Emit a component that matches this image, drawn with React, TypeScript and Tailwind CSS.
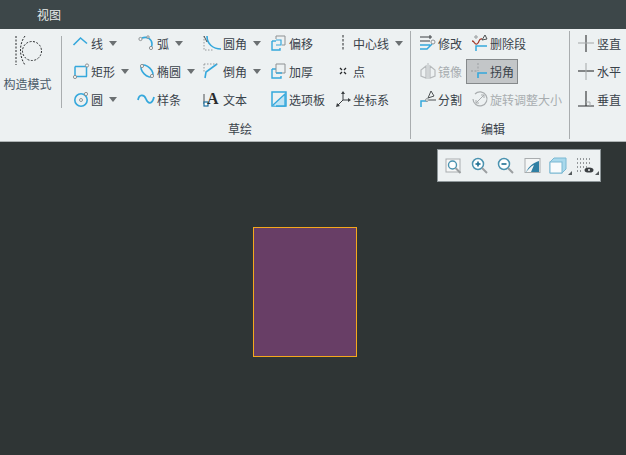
import React from "react";

const B = "#35a8dc";
const K = "#3b3f42";
const G = "#a9adaf";

const Dot = ({ x, y, r = 1.6 }: { x: number; y: number; r?: number }) => (
  <circle cx={x} cy={y} r={r} fill="#f4f6f6" stroke="#85898b" strokeWidth="0.9" />
);

const Svg = ({ children, w = 18, h = 18 }: { children: React.ReactNode; w?: number; h?: number }) => (
  <svg width={w} height={h} viewBox={`0 0 ${w} ${h}`} fill="none" className="shrink-0">
    {children}
  </svg>
);

const icons: Record<string, React.ReactNode> = {
  line: <Svg><path d="M1.5 11l7-7 6.5 5.5" stroke={B} strokeWidth="1.6" /></Svg>,
  arc: <Svg><path d="M4 4c5-2 10 1 10 6 0 2-.5 3-1 4" stroke={B} strokeWidth="1.6" /><Dot x={2.5} y={5} /><Dot x={13} y={14} /><Dot x={10} y={3} r={1.2} /></Svg>,
  rect: <Svg><path d="M3 4.5h12M14.5 4.5v10M3 14.5h12M3 4.5v10" stroke={B} strokeWidth="1.5" /><Dot x={15} y={3.5} /><Dot x={3} y={15} /></Svg>,
  ellipse: <Svg><ellipse cx="9" cy="9" rx="4" ry="7.5" transform="rotate(-45 9 9)" stroke={B} strokeWidth="1.6" /><Dot x={4} y={4} /><Dot x={14} y={14} /></Svg>,
  circle: <Svg><circle cx="9" cy="10" r="6.2" stroke={B} strokeWidth="1.6" /><Dot x={9} y={10} r={1.5} /><Dot x={14} y={4} /></Svg>,
  spline: <Svg w={19}><path d="M1 10c1-6 6-6 8-1s6 6 8-2" stroke={B} strokeWidth="1.8" /></Svg>,
  fillet: <Svg w={19}><path d="M4 2c0 8 6 13 14 13" stroke={B} strokeWidth="1.6" /><path d="M1 2v14h10" stroke="#8d9193" strokeWidth="0.9" strokeDasharray="1.5 1.5" /><path d="M1 2l3 6" stroke={K} strokeWidth="0.9" /></Svg>,
  chamfer: <Svg w={19}><path d="M2 16l1-6 11-8" stroke={B} strokeWidth="1.6" /><path d="M1 2h14M1 2v8" stroke="#8d9193" strokeWidth="0.9" strokeDasharray="1.5 1.5" /></Svg>,
  text: <Svg w={19}><path d="M1 4v10" stroke={K} strokeWidth="0.9" /><rect x="1" y="12" width="4" height="4" fill="#fff" stroke="#1d6fa0" strokeWidth="1.2" /><text x="4" y="14" fontFamily="'Liberation Serif',serif" fontWeight="700" fontSize="16" fill="#2a2c2e">A</text></Svg>,
  offset: <Svg><path d="M2 7v9h8v-2" stroke={B} strokeWidth="1.4" /><path d="M2 7h4" stroke={B} strokeWidth="1.4" /><path d="M6 5V2h9v9h-3" stroke="#8d9193" strokeWidth="1" /><path d="M6 6h5v5H6" stroke={B} strokeWidth="1.2" /></Svg>,
  thicken: <Svg><path d="M2 7v9h9v-2M2 7h4" stroke={B} strokeWidth="1.4" /><path d="M6 2h9v9H6z" stroke="#8d9193" strokeWidth="1" /><path d="M6 11h6" stroke={B} strokeWidth="1.4" /></Svg>,
  palette: <Svg><rect x="2" y="2" width="14" height="14" stroke={B} strokeWidth="1.5" /><path d="M3 15L15 4v12H6" fill="#bfe3f3" stroke={B} strokeWidth="1.3" /></Svg>,
  centerline: <Svg w={14}><path d="M7 1v16" stroke="#26292b" strokeWidth="1" strokeDasharray="2.5 1.5" /></Svg>,
  point: <Svg w={14}><path d="M4 6l2 2M10 6L8 8M4 12l2-2M10 12L8 10" stroke="#26292b" strokeWidth="1.3" /></Svg>,
  csys: <Svg><path d="M9 2v8M9 10h6M9 10l-6 6" stroke={K} strokeWidth="1" /><path d="M9 1l-2 3h4zM17 10l-3-2v4zM2 17l1-4 3 3z" fill={K} /></Svg>,
  modify: <Svg><path d="M1 3h12M11 1v4M1 7h10" stroke={K} strokeWidth="1" /><path d="M1 11h10M1 15h7l5-5" stroke={B} strokeWidth="1.5" /><Dot x={14} y={8} r={2} /></Svg>,
  deleteseg: <Svg><path d="M1 7c3 0 2 4 5 3s1-6 5-5" stroke="#a23b2d" strokeWidth="1.3" /><path d="M5 17v-5h11" stroke={B} strokeWidth="1.5" /><path d="M11 6l3-5 2 4z" stroke={K} strokeWidth="0.9" /><Dot x={5} y={3} r={1.2} /></Svg>,
  mirror: <Svg><path d="M9 1v16" stroke="#b6babc" strokeWidth="1" /><path d="M7 4L2 8v6l5 2zM11 4l5 4v6l-5 2z" stroke="#b6babc" strokeWidth="1.2" /></Svg>,
  corner: <Svg><path d="M7 1v8M0 9h6" stroke="#a5a9ab" strokeWidth="1.3" strokeDasharray="2 1.5" /><path d="M7 16v-5h9" stroke={B} strokeWidth="1.6" /></Svg>,
  divide: <Svg><path d="M2 17v-6h6" stroke={B} strokeWidth="1.5" /><Dot x={8} y={10} r={1.4} /><path d="M10 10h7M9 8l3-7 3 5z" stroke={K} strokeWidth="0.9" /></Svg>,
  rotate: <Svg><path d="M4 4a7 7 0 1 1-2 5" stroke={G} strokeWidth="1.2" /><path d="M5 13l8-8M10 5h3v3M5 10v3h3" stroke={G} strokeWidth="1" /></Svg>,
  vert: <Svg><path d="M8 1v17" stroke="#2c2f31" strokeWidth="1.1" /><path d="M0 9h16" stroke={G} strokeWidth="1.1" /></Svg>,
  horiz: <Svg><path d="M0 9h16" stroke="#2c2f31" strokeWidth="1.1" /><path d="M8 1v17" stroke={G} strokeWidth="1.1" /></Svg>,
  perp: <Svg><path d="M8 1v15M0 16h16" stroke="#2c2f31" strokeWidth="1.1" /><path d="M8 12h4v4" stroke={G} strokeWidth="1" /></Svg>,
};

const Caret = () => <span className="ml-[6px] w-0 h-0 border-l-[4px] border-r-[4px] border-t-[5px] border-l-transparent border-r-transparent border-t-[#6b7072]" />;

function Item({ icon, label, caret, disabled, active }: { icon: string; label: string; caret?: boolean; disabled?: boolean; active?: boolean }) {
  return (
    <div className="h-[28px] flex items-center">
      <div className={`flex items-center h-[25px] ${active ? "bg-[#c3c6c8] border border-[#85898b] pr-[3px] pl-[2px] -ml-[3px]" : ""}`}>
        <span className="w-[21px] flex justify-center shrink-0">{icons[icon]}</span>
        <span className={`pt-[2px] text-[12px] leading-none whitespace-nowrap ${disabled ? "text-[#a8adb0]" : "text-[#39424a]"}`}>{label}</span>
        {caret && <Caret />}
      </div>
    </div>
  );
}

const Col = ({ className, children }: { className: string; children: React.ReactNode }) => (
  <div className={`flex flex-col ${className}`}>{children}</div>
);

const GroupLabel = ({ children }: { children: React.ReactNode }) => (
  <div className="h-[20px] flex items-center justify-center text-[12px] text-[#39424a] leading-none">{children}</div>
);

const ToolBtn = ({ children }: { children: React.ReactNode }) => (
  <div className="w-[26px] h-[20px] flex items-center justify-center">{children}</div>
);

const Mag = ({ sign }: { sign?: "+" | "-" }) => (
  <svg width="18" height="18" viewBox="0 0 18 18" fill="none">
    <circle cx="7" cy="7" r="5.5" fill="#fff" stroke="#4b93b0" strokeWidth="1.5" />
    {sign && <path d="M4.5 7h5" stroke="#1e6e92" strokeWidth="1.6" />}
    {sign === "+" && <path d="M7 4.5v5" stroke="#1e6e92" strokeWidth="1.6" />}
    <path d="M11 11l5 5" stroke="#9b9fa1" strokeWidth="2" />
  </svg>
);

export default function App() {
  return (
    <div className="w-[626px] h-[455px] flex flex-col overflow-hidden bg-[#2f3535] font-['Noto_Sans_CJK_SC','Liberation_Sans',sans-serif]">
      <div className="h-[29px] bg-[#3d4749] flex items-center pl-[37px] text-[12px] text-[#e8ecec] shrink-0">视图</div>

      <div className="h-[113px] bg-[#edf1f2] border-b border-b-[#aeb3b4] flex shrink-0">
        <div className="w-[61px] shrink-0 flex flex-col items-center pt-[5px] pr-[6px]">
          <svg width="30" height="32" viewBox="0 0 30 32" fill="none">
            <path d="M3 2v29" stroke="#26292b" strokeWidth="1" strokeDasharray="2 1.5" />
            <path d="M12 2C6 10 6 22 12 31" stroke="#26292b" strokeWidth="1" strokeDasharray="2 1.5" />
            <circle cx="19" cy="17" r="9.5" stroke="#26292b" strokeWidth="1" strokeDasharray="2 1.5" />
          </svg>
          <span className="mt-[12px] text-[12px] leading-none text-[#4a5a68] whitespace-nowrap">构造模式</span>
        </div>
        <div className="w-px h-[72px] mt-[7px] bg-[#a9adaf] shrink-0" />

        <div className="w-[348px] shrink-0 flex flex-col pl-[8px]">
          <div className="flex h-[84px]">
            <Col className="w-[66px]">
              <Item icon="line" label="线" caret />
              <Item icon="rect" label="矩形" caret />
              <Item icon="circle" label="圆" caret />
            </Col>
            <Col className="w-[66px]">
              <Item icon="arc" label="弧" caret />
              <Item icon="ellipse" label="椭圆" caret />
              <Item icon="spline" label="样条" />
            </Col>
            <Col className="w-[66px]">
              <Item icon="fillet" label="圆角" caret />
              <Item icon="chamfer" label="倒角" caret />
              <Item icon="text" label="文本" />
            </Col>
            <Col className="w-[64px]">
              <Item icon="offset" label="偏移" />
              <Item icon="thicken" label="加厚" />
              <Item icon="palette" label="选项板" />
            </Col>
            <Col className="w-[78px]">
              <Item icon="centerline" label="中心线" caret />
              <Item icon="point" label="点" />
              <Item icon="csys" label="坐标系" />
            </Col>
          </div>
          <div className="mt-[6px]"><GroupLabel>草绘</GroupLabel></div>
        </div>
        <div className="w-px h-[108px] mt-[2px] bg-[#a9adaf] shrink-0" />

        <div className="w-[158px] shrink-0 flex flex-col pl-[6px]">
          <div className="flex h-[84px]">
            <Col className="w-[52px]">
              <Item icon="modify" label="修改" />
              <Item icon="mirror" label="镜像" disabled />
              <Item icon="divide" label="分割" />
            </Col>
            <Col className="w-[98px]">
              <Item icon="deleteseg" label="删除段" />
              <Item icon="corner" label="拐角" active />
              <Item icon="rotate" label="旋转调整大小" disabled />
            </Col>
          </div>
          <div className="mt-[6px]"><GroupLabel>编辑</GroupLabel></div>
        </div>
        <div className="w-px h-[108px] mt-[2px] bg-[#a9adaf] shrink-0" />

        <Col className="pl-[6px]">
          <Item icon="vert" label="竖直" />
          <Item icon="horiz" label="水平" />
          <Item icon="perp" label="垂直" />
        </Col>
      </div>

      <div className="relative flex-1">
        <div className="absolute left-[437px] top-[7px] w-[164px] h-[33px] bg-[#edf1f2] border border-[#8e9699] flex items-center pl-[3px]">
          <ToolBtn>
            <svg width="18" height="18" viewBox="0 0 18 18" fill="none">
              <rect x="1" y="2" width="14" height="13" fill="#f6f7f7" stroke="#a9adaf" />
              <circle cx="7.5" cy="8" r="4" fill="#fff" stroke="#4b93b0" strokeWidth="1.4" />
              <path d="M10.5 11l5 5" stroke="#9b9fa1" strokeWidth="2" />
            </svg>
          </ToolBtn>
          <ToolBtn><Mag sign="+" /></ToolBtn>
          <ToolBtn><Mag sign="-" /></ToolBtn>
          <ToolBtn>
            <svg width="17" height="17" viewBox="0 0 17 17" fill="none">
              <rect x="1" y="1.5" width="15" height="14" fill="#f4f6f6" stroke="#a9adaf" />
              <path d="M2 15c3-6 7-9 13-11v11z" fill="#2f7fa3" />
              <path d="M2 15c3-3 5-6 8-7l-3 7z" fill="#f4f6f6" />
            </svg>
          </ToolBtn>
          <ToolBtn>
            <div className="relative ml-[2px]">
              <svg width="20" height="18" viewBox="0 0 20 18" fill="none">
                <path d="M1 5l4-4h12v11l-4 4H1z" fill="#a9d9ec" stroke="#7ab8d2" />
                <rect x="1" y="5" width="12" height="11" fill="#f8fbfc" stroke="#7ab8d2" />
              </svg>
              <span className="absolute right-[-3px] bottom-0 w-0 h-0 border-l-[4px] border-l-transparent border-b-[4px] border-b-[#555a5c]" />
            </div>
          </ToolBtn>
          <ToolBtn>
            <div className="relative ml-[3px]">
              <svg width="20" height="18" viewBox="0 0 20 18" fill="none">
                <path d="M1 2h14M1 6h14M1 10h12M1 14h5" stroke="#3b3f42" strokeWidth="1" strokeDasharray="1 2" />
                <ellipse cx="13" cy="13" rx="4.5" ry="2.6" fill="#3b3f42" />
                <circle cx="13" cy="13" r="1" fill="#edf1f2" />
              </svg>
              <span className="absolute right-[-3px] bottom-0 w-0 h-0 border-l-[4px] border-l-transparent border-b-[4px] border-b-[#555a5c]" />
            </div>
          </ToolBtn>
        </div>

        <div className="absolute left-[253px] top-[85px] w-[104px] h-[130px] bg-[#683e66] border border-[#f5a81c]" />
      </div>
    </div>
  );
}
